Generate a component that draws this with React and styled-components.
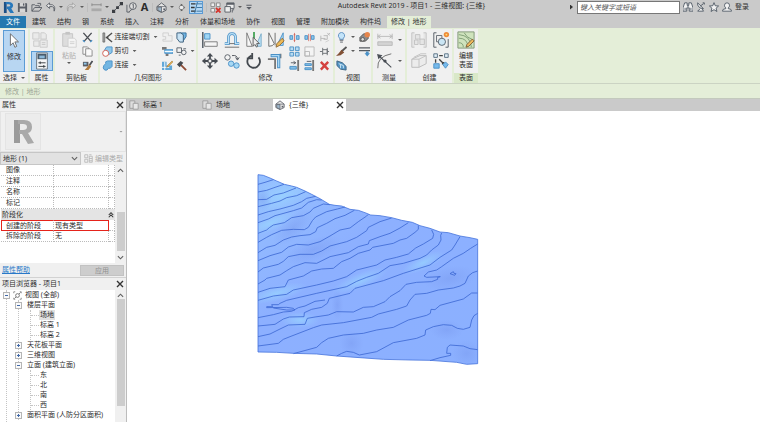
import React from 'react';
import styled, { createGlobalStyle, css } from 'styled-components';

const GlobalStyle = createGlobalStyle`
  * {
    box-sizing: border-box;
  }

  body {
    margin: 0;
    overflow: hidden;
    background: #fff;
    color: #2c2c2c;
    font: 7px/10px 'Noto Sans', 'Noto Sans CJK SC', sans-serif;
  }

  button, input, select {
    font: inherit;
    color: inherit;
    margin: 0;
    padding: 0;
    border: 0;
    background: none;
  }
`;

const ink = '#5a5e66';
const blue = '#4a90c6';
const sky = '#8fc7ea';
const pale = '#cfcfcf';

/* small icons use a 12 unit box, large ones an 18 unit box */
const small = {
  save: (
    <>
      <path d="M1 1h9l1 1v9H1z" fill={ink} />
      <path d="M3 1h6v4H3zM3 7h6v4H3z" fill="#d6d6d6" />
      <path d="M6.5 1.5h1.5v2.5H6.5z" fill={ink} />
    </>
  ),
  open: <path d="M1 10V3h3l1 1h4v2M1 10l3-4h8l-3 4zM7 1.5h3.5V4" fill="none" stroke={ink} />,
  undo: <path d="M5 1L1.5 4 5 7V5h3q2.5.5 2 5 2-5-2-7H5z" fill="#e6e6e6" stroke={ink} />,
  redo: <path d="M7 1l3.5 3L7 7V5H4Q1.500 5.500 2 10 0 5 4 3h3z" fill="#ddd" stroke="#a4a4a4" />,
  measure: (
    <>
      <path d="M1 3h10M1 1.500v3M11 1.500v3" stroke="#8a8a8a" fill="none" />
      <path d="M.5 7h11v3H.5z" fill="#aaa" />
    </>
  ),
  line: (
    <>
      <path d="M2 10L10 2" stroke={ink} />
      <path d="M0 8.500h3.500V12H0zM4.500 4.500h3v3h-3zM8.500 0H12v3.500H8.500z" fill="#3a3d42" />
    </>
  ),
  tag: (
    <>
      <circle cx="7.500" cy="4.500" r="3.700" fill="#ddd" stroke={ink} />
      <path d="M7 7.500L3 11M1 3v8h3M7 3l1-.5V7" stroke={ink} fill="none" />
    </>
  ),
  cube: (
    <>
      <path d="M1 5l5-4 5 4v4l-5 2.500L1 9z" fill="#e6e6e6" stroke={ink} />
      <path d="M1 5h10M6 5.500v5.500L2 9V5.500z" fill="#9db6ca" stroke={ink} strokeWidth=".8" />
      <path d="M8 7h2v2H8z" fill={ink} />
    </>
  ),
  section: (
    <>
      <circle cx="6" cy="6" r="3" fill="#eee" stroke="#777" />
      <path d="M5 1l3 1.500L5 4zM5 8l3 1.500L5 11z" fill="#555" />
      <path d="M9 4l2 2-2 2" fill="#777" />
    </>
  ),
  closeViews: (
    <>
      <path d="M1 1h4v4H1zM7 1h4v4H7zM1 7h4v4H1z" fill="#eee" stroke="#888" />
      <path d="M6.500 6.500l5 5M11.500 6.500l-5 5" stroke="#d6362e" strokeWidth="2" />
    </>
  ),
  switchViews: (
    <>
      <path d="M3 1h8v6H3z" fill="#eee" stroke={ink} />
      <path d="M3 2h8" stroke={ink} strokeWidth="2" />
      <path d="M1 5h6v6H1z" fill="#eee" stroke={ink} />
      <path d="M9 11.500V8.500h2" stroke={ink} fill="none" />
    </>
  ),
  customise: <path d="M2 2.500h8v1.500H2zM2 6h8L6 10z" fill={ink} />,
  binoculars: (
    <>
      <path d="M2 1h3v3h2V1h3l2 6v4H7.500V7h-3v4H0V7z" fill="#f2f2f2" stroke="#444f5c" />
      <path d="M2.500 7v3M9.500 7v3M5 5h2" stroke="#444f5c" />
    </>
  ),
  satellite: (
    <>
      <path d="M2 1q-1 6 7 7zM5 8l-3 3h7L7 8" fill="#f2f2f2" stroke="#444f5c" />
      <path d="M5 5l4-3M8 1h2v2" stroke="#444f5c" fill="none" />
    </>
  ),
  star: <path d="M6 .8l1.500 3.700 4 .3-3 2.600 1 4L6 9.200l-3.500 2.200 1-4-3-2.600 4-.3z" fill="#f2f2f2" stroke="#444f5c" />,
  user: <path d="M6 1q3 0 3 3 0 2-1.500 3v1q4 0 4 3H.5q0-3 4-3V7Q3 6 3 4q0-3 3-3z" fill="#f2f2f2" stroke="#444f5c" />,
  cut: (
    <>
      <path d="M1.500 1l8 9M10.500 1l-8 9" stroke="#4a4d53" strokeWidth="1.500" />
      <path d="M1 9l2 2M9 11l2-2" stroke={blue} strokeWidth="1.500" />
    </>
  ),
  copy: (
    <>
      <path d="M1 1h5l1 1v7H1z" fill="#fafafa" stroke="#888" />
      <path d="M4 3h5l2 2v6H4z" fill="#fafafa" stroke="#888" />
    </>
  ),
  match: (
    <>
      <path d="M1 2h6v5H1z" fill="#5c5f65" />
      <path d="M2 3h3v2H2z" fill={sky} />
      <path d="M11.500 1L8 6" stroke="#4c4f55" strokeWidth="2" />
      <path d="M8 5l2 2-3 4-4 0z" fill="#b27b3b" />
    </>
  ),
  cope: (
    <>
      <path d="M1 1h2v10H1z" fill="#a9a9a9" stroke="#555" strokeWidth=".7" />
      <path d="M11 1L5 6l6 5M4 6h3" fill="none" stroke="#4d4d4d" strokeWidth="1.500" />
    </>
  ),
  cutGeo: (
    <>
      <path d="M3 4l2-3h6v6L8 9H3z" fill={sky} stroke={blue} />
      <circle cx="4" cy="8" r="3.300" fill="#fff" stroke="#cf5a4e" />
    </>
  ),
  join: <path d="M4 4V2l2-1h5v6L9 9H7q-1 3-4 2Q0 9 2 6z" fill="#72b5e2" stroke={blue} />,
  wallJoinGrey: <path d="M1 1h6v3h4v6H1V8h3V5H1z" fill="#efefef" stroke={pale} />,
  wallJoin: (
    <>
      <path d="M4 1h7v4l-4 6z" fill="#6fb4e3" stroke="#336e9d" />
      <path d="M1 1h4l3 2v8H4L1 7z" fill="#c8e3f5" stroke="#3a5d79" />
    </>
  ),
  beam: (
    <>
      <path d="M0 1h5v3H0zM4 8h3v3H4z" fill="#777" />
      <path d="M3 4h9v4H3z" fill="#88c2e9" stroke={blue} />
      <path d="M3 6h9" stroke="#fff" />
    </>
  ),
  split: <path d="M1 2h5v5H1zM6 7a2.500 2.500 0 1 0 5 0 2.500 2.500 0 0 0-5 0M3 10h2M8 3h3" fill="#f1f1f1" stroke="#596069" />,
  paint: (
    <>
      <path d="M0 2h5v4h6v5H0z" fill="#60a7d8" />
      <path d="M0 8h8M3 2v9" stroke="#fff" />
      <path d="M11 1L6 6l-1 2 2-1 5-5z" fill="#e7b04c" stroke="#896024" strokeWidth=".5" />
    </>
  ),
  hammer: (
    <>
      <path d="M5 5l6 6" stroke="#8d4b35" strokeWidth="2" />
      <path d="M1 5l4-4 3 2-4 5z" fill="#464b51" />
    </>
  ),
  splitEl: (
    <>
      <path d="M1 4h3v4H1zM8 4h3v4H8z" fill={sky} stroke={blue} />
      <path d="M6 1v10M5 3h2M5 9h2" stroke="#d0564a" strokeWidth=".8" />
    </>
  ),
  splitGap: (
    <>
      <path d="M1 4h3v4H1zM8 4h3v4H8z" fill={sky} stroke={blue} />
      <path d="M5 2v8M7 2v8" stroke="#d0564a" strokeWidth=".7" />
    </>
  ),
  unpin: (
    <>
      <path d="M2 4v6M2 7h5M5 4h4v4H5M9 1l3 3M12 1L9 4" fill="none" stroke="#b8b8b8" />
      <path d="M7 11l4-2" stroke={pale} />
    </>
  ),
  array: <path d="M1 1h4v4H1zM7 1h4v4H7zM1 7h4v4H1zM7 7h4v4H7z" fill="#b9dcf3" stroke={blue} />,
  scale: <path d="M1 1h10v10H1zM1 6h5v5H1z" fill="#f4f4f4" stroke="#b9b9b9" />,
  pin: <path d="M1 6h3M4 2v8M4 4h5v4H4M9 2v8M9 6h2" fill="none" stroke="#6a6e73" />,
  trimOne: (
    <>
      <path d="M9 0h2v12H9z" fill="#777" />
      <path d="M1 7h7v3H1z" fill="#82bee7" stroke={blue} />
      <path d="M2 3h5M5 1.500L7.500 3 5 4.500" stroke={ink} fill="none" />
    </>
  ),
  trimMany: (
    <>
      <path d="M9 0h2v12H9z" fill="#777" />
      <path d="M1 4h7v2H1zM1 8.500h7v2H1z" fill="#82bee7" stroke={blue} />
      <path d="M3 1.500h5" stroke={ink} />
    </>
  ),
  remove: <path d="M2 2l8 8.500M10 2l-8 8.500" stroke="#d4413f" strokeWidth="2.600" />,
  bulb: (
    <>
      <path d="M6 .5a3.500 3.500 0 0 1 2 6.300V8H4V6.800A3.500 3.500 0 0 1 6 .5z" fill="#c4e4fa" stroke="#5d8fc1" />
      <path d="M4 9h4M4.500 11h3" stroke={ink} />
    </>
  ),
  brush: (
    <>
      <path d="M11.500 1L6 6" stroke="#555" strokeWidth="2" />
      <path d="M6 4l3 3-4 3-5 1 3-3z" fill="#825135" />
    </>
  ),
  box: (
    <>
      <path d="M1 1l6 2 4 4v4l-6-1-4-4z" fill="#5495c5" stroke="#3c6380" />
      <path d="M3 4l5 2v3M5 5v4" fill="none" stroke="#d5ecfa" />
    </>
  ),
  override: (
    <>
      <path d="M1 6l4-4h5v5L7 10H1z" fill="#8b8b8b" stroke="#555" />
      <circle cx="4" cy="8" r="2" fill="#ddd" stroke="#555" />
      <circle cx="9" cy="3" r="3" fill="#e6854b" />
    </>
  ),
  lineWork: (
    <>
      <path d="M0 2h12M0 5h12" stroke="#555a60" strokeWidth="1.500" />
      <path d="M7.500 6v2H6l3 3.500L12 8h-1.500V6z" fill={blue} />
    </>
  ),
  sheet: (
    <>
      <path d="M1 1h6v9H1z" fill="#ddd" stroke="#999" />
      <path d="M5 4h6v7H5z" fill="#e7e7e7" stroke="#999" />
    </>
  ),
  typeEdit: <path d="M1 1h4v4H1zM1 7h4v4H1zM7 3h4v8H7zM7 6h4M7 9h4M7 1h3" fill="none" stroke="#b0b0b0" />,
  views: (
    <>
      <path d="M1 3V1h2M9 1h2v2M11 9v2H9M3 11H1V9" fill="none" stroke="#777" />
      <circle cx="6" cy="6" r="2.500" fill="none" stroke="#555" />
      <path d="M2 10l2-2M10 2L8 4" fill="none" stroke="#555" />
    </>
  ),
};

const large = {
  arrow: <path d="M5 1v13l3-3 2 5 2-1-2-5h4z" fill="#fff" stroke="#666" />,
  families: <path d="M1 1h7v7H1zM10 4V1h4l2 2v5h-6zM2 10h6v6H2zM9 9h8v8H9zM11 12h4M11 14h4" fill="#eaeaea" stroke="#c8c8c8" />,
  properties: (
    <>
      <path d="M3 0h12v18H3z" fill="#f6f7f8" stroke="#65717d" />
      <path d="M4 1h10v6H4z" fill="#4a5b6c" />
      <path d="M6 3h6v3H6z" fill="#8db9da" />
      <path d="M5 11h8M5 15h8M7 9.500v3M11 13.500v3" stroke="#30343a" />
    </>
  ),
  paste: (
    <>
      <path d="M2 2h11v14H2z" fill="#ddd" stroke="#c4c4c4" />
      <path d="M5 0h5v3H5z" fill="#c4c4c4" />
      <path d="M8 7h7l2 2v8H8zM10 11h5M10 13h5" fill="#f4f4f4" stroke={pale} />
    </>
  ),
  align: (
    <>
      <path d="M1 0v18" stroke="#4f5861" strokeWidth="1.600" />
      <path d="M3 2h6v6H3z" fill="#9fd6f5" stroke={blue} />
      <path d="M3 11h14v5H3z" fill="#f5f5f5" stroke="#777" />
    </>
  ),
  offset: (
    <>
      <path d="M1 13h4V7q0-5 4-5t4 5v6h4" fill="none" stroke={blue} strokeWidth="3" />
      <path d="M1 13h4V7q0-5 4-5t4 5v6h4" fill="none" stroke="#bce0f5" strokeWidth="1.400" />
      <path d="M1 17h16M6 13h6" stroke="#666" />
    </>
  ),
  mirrorPick: (
    <>
      <path d="M1 1v15h6z" fill="#f7f7f7" stroke="#777" />
      <path d="M17 2v14h-6z" fill="#b9dff5" stroke="#7caeca" />
      <path d="M9 0v8" stroke="#45a356" strokeWidth="2" />
      <path d="M8 6v10l2-2 2 3 1-1-1-3h3z" fill="#eee" stroke="#555" />
    </>
  ),
  mirrorDraw: (
    <>
      <path d="M1 1v15q5 0 6-3zM8 1v14" fill="#f7f7f7" stroke="#666" />
      <path d="M17 1v14h-7z" fill="#aedbf5" stroke={blue} />
      <path d="M16 7l-6 6-1 4 4-2 5-5z" fill="#ecb957" stroke="#8d6939" />
    </>
  ),
  move: (
    <>
      <path d="M9 2v14M2 9h14" stroke="#474c53" strokeWidth="2" />
      <path d="M9 0l3.500 4h-7zM9 18l3.500-4h-7zM0 9l4-3.500v7zM18 9l-4-3.500v7z" fill="#474c53" />
      <path d="M7 7h4v4H7z" fill="#eee" stroke="#474c53" />
    </>
  ),
  duplicate: (
    <>
      <circle cx="4" cy="5" r="3" fill="#f4f4f4" stroke="#565c64" />
      <circle cx="8" cy="12" r="3" fill="#a7d8f4" stroke={blue} />
      <circle cx="14" cy="14" r="3" fill="#a7d8f4" stroke={blue} />
      <path d="M9 3q6-1 6 4M13 5l2 3 2-3" stroke="#474c53" fill="none" />
    </>
  ),
  rotate: <path d="M6 3A7 7 0 1 0 14 5M7 0v6H1" fill="none" stroke="#44494f" strokeWidth="2" />,
  trim: (
    <>
      <path d="M0 7h8v11M14 6V1" fill="none" stroke="#777" strokeWidth="2" />
      <path d="M3 3h11M12 3v14" fill="none" stroke={blue} strokeWidth="3.500" />
      <path d="M4 3h8v13" fill="none" stroke="#a9d8f5" strokeWidth="1.500" />
    </>
  ),
  dimension: (
    <>
      <path d="M1 5h16M1 2v6M17 2v6M4 3L1 5l3 2M14 3l3 2-3 2" fill="none" stroke="#b9b9b9" />
      <path d="M1 11h16v4H1z" fill="#d4d4d4" stroke="#b9b9b9" />
    </>
  ),
  measureArc: (
    <>
      <path d="M1 17Q0 4 16 1" fill="none" stroke="#686868" />
      <path d="M3 4l13 12M1 2l4 1-3 3z" fill="#474c53" stroke="#474c53" strokeWidth="1.200" />
      <circle cx="9" cy="9" r="1.800" fill="#474c53" />
    </>
  ),
  group: <path d="M4 1H1v16h3M14 1h3v16h-3M4 9h4v5H4zM5 3h5v5H5zM10 8h5v6h-5z" fill="#e5e5e5" stroke="#c1c1c1" />,
  similar: (
    <>
      <path d="M4 1H1v16h3M14 17h3V8" fill="none" stroke="#4e5660" />
      <path d="M4 4h6v7H4z" fill="#eee" stroke="#626972" />
      <circle cx="10" cy="11" r="4" fill="#cbe5f4" stroke="#525d69" />
      <circle cx="15" cy="3" r="3" fill="#ef8c38" />
      <circle cx="15" cy="3" r="1" fill="#fbe17a" />
    </>
  ),
  parts: (
    <>
      <path d="M1 7l9-4h7v9l-8 4H1z" fill="#ececec" stroke="#b9b9b9" />
      <path d="M1 7h8v9M3 5l8-4h6M9 7l8-4" fill="none" stroke="#c0c0c0" />
    </>
  ),
  assembly: (
    <>
      <path d="M1 1h4v4H1zM13 1h4v4h-4z" fill="#e2eff7" stroke="#536b7f" />
      <path d="M7 3h4M3 7v4M7 7l5 5M10 12h2v-2" stroke="#444" fill="none" strokeWidth="1.500" />
      <path d="M1 12h6v5H1zM14 10l3 3-3 4-3-4z" fill="#77baeb" stroke={blue} />
    </>
  ),
  surface: (
    <>
      <path d="M0 0h18v18H0z" fill="#cfe3bd" stroke="#7d9375" />
      <path d="M1 12q5 0 5 5M1 7q10 0 10 10M1 3q13 1 14 14M7 1q2 5 10 8" stroke="#7d9c74" fill="none" />
      <path d="M16 8l-6 6-1 3 3-1 6-6z" fill="#eebb5d" stroke="#795a38" />
    </>
  ),
};

const Svg = styled.svg`
  display: block;
  flex: none;
  width: ${({ $size }) => $size}px;
  height: ${({ $size }) => $size}px;
`;

const Icon = ({ name, size = 11 }) => (
  <Svg $size={size} viewBox="0 0 12 12" aria-hidden="true">
    {small[name]}
  </Svg>
);

const BigIcon = ({ name }) => (
  <Svg $size={18} viewBox="-1 -1 20 20" aria-hidden="true">
    {large[name]}
  </Svg>
);

const RevitLogo = () => (
  <Svg $size={11} viewBox="0 0 12 12" aria-label="Revit">
    <path d="M1 0h3v12H1z" fill="#1b4f86" />
    <path d="M3 0h3q5 0 5 4 0 2-2 3l3 5H8L5 7.500H4V5h2q2 0 2-1.200T6 2.500H3z" fill="#2878bb" />
  </Svg>
);

const properties = [
  { label: '图像', value: '' },
  { label: '注释', value: '' },
  { label: '名称', value: '' },
  { label: '标记', value: '' },
];

const tabs = ['建筑', '结构', '钢', '系统', '插入', '注释', '分析', '体量和场地', '协作', '视图', '管理', '附加模块', '构件坞'];

const branches = [
  { label: '楼层平面', children: ['场地', '标高 1', '标高 2'] },
  { label: '天花板平面' },
  { label: '三维视图' },
  { label: '立面 (建筑立面)', children: ['东', '北', '南', '西'] },
  { label: '面积平面 (人防分区面积)' },
];

/* terrain is drawn at three units to the pixel */
const outline = 'M24 14L40 16 60 24 80 33 103 43 125 48 140 52 165 63 185 73 210 86 238 103 255 106 275 108 300 118 325 121 345 128 362 135 390 137 425 143 455 151 487 157 510 167 540 175 570 186 595 188 630 198 660 203 683 208V581L650 583 620 577 540 571 480 570 400 568 330 563 260 558 200 552 130 550 80 547 24 546Z';

const contours = [
  '24 43 45 37 70 29',
  '24 66 50 61 75 52 102 43',
  '24 89 50 88 72 75 100 69 138 54',
  '24 110 65 100 90 93 110 83 140 77 167 65',
  '24 135 55 125 90 117 130 106 155 95 170 85 197 79',
  '24 158 55 147 75 137 90 133 130 122 155 114 175 97 200 89 215 90',
  '24 190 50 180 58 173 70 165 103 158 125 143 160 137 180 126 190 115 220 102 240 104',
  '24 217 50 202 65 194 95 181 130 178 163 179 175 172 187 152 197 141 230 125 262 117 285 111',
  '24 248 50 232 75 226 100 210 125 201 150 197 180 194 197 185 202 173 230 160 255 146 285 136 313 121',
  '24 272 60 257 95 247 115 231 140 223 175 225 210 215 240 198 270 180 300 174 325 155 350 138 355 133',
  '24 306 40 294 85 283 100 274 115 260 150 253 190 253 215 243 240 228 290 215 320 202 350 182 355 172 390 155 425 144',
  '24 342 45 330 50 325 90 315 110 302 130 290 165 278 200 280 240 260 295 248 325 230 355 222 358 212 390 200 420 190 450 174 475 158',
  '24 367 60 355 105 350 115 330 160 318 185 303 215 297 250 295 275 275 300 265 325 250 360 240 368 232 430 220 450 210 470 205 495 187 505 178 505 166',
  '24 391 70 378 110 373 130 360 200 345 250 333 290 320 320 300 380 285 405 270 440 262 475 252 497 234 520 222 548 205 551 193 545 180',
  '90 400 110 391 200 370 290 350 320 334 350 322 385 310 420 287 460 280 510 265 530 255 545 240 565 225 573 210 572 196 575 189',
  '90 400 85 404 65 404 68 410 50 410 50 413 110 412 130 415 135 420 110 420 70 414',
  '24 443 70 434 100 426 125 424 145 413 165 408 195 394 225 390',
  '24 468 75 463 100 447 118 441 162 440 163 428 185 418 215 412 232 400 238 385 300 370 315 355 400 332 460 310 540 285 570 262 605 240 615 225 630 200',
  '24 500 60 492 90 477 115 465 165 463 172 445 195 441 235 435 260 425 310 426 340 412 370 410 405 395 420 380 450 362 468 343 500 337 545 335 563 328 563 322 571 320 530 322 522 318 535 306 560 300 575 290 610 265 640 250 662 235 683 222',
  '24 528 85 520 100 508 120 500 190 473 215 465 280 458 365 442 385 432 440 418 470 408 480 390 495 373 530 370 565 360 610 354 630 348 645 340 655 318 668 308 683 303',
  '130 551 200 532 215 518 235 505 280 495 340 490 380 480 430 472 475 450 530 436 541 430 543 418 555 419 570 406 640 387 665 369 683 369',
  '260 558 275 550 290 544 310 547 328 555 380 545 430 518 500 505 525 495 527 480 550 470 580 464 605 466 622 475 640 478 660 472 665 450 672 437 683 430',
  '540 572 570 563 602 556 602 550 590 550 592 532 600 525 640 528 660 536 683 539',
  '600 311 610 305 612 310 618 311 614 316 600 311',
];

const patches = [
  { x: 95, y: 78, rx: 115, ry: 55, turn: -18, fill: 'light' },
  { x: 60, y: 160, rx: 90, ry: 24, turn: -22, fill: 'light' },
  { x: 80, y: 370, rx: 95, ry: 24, turn: -14, fill: 'light' },
  { x: 330, y: 332, rx: 90, ry: 24, turn: -22, fill: 'light' },
  { x: 520, y: 278, rx: 70, ry: 22, turn: -25, fill: 'light' },
  { x: 150, y: 450, rx: 60, ry: 24, turn: 0, fill: 'light' },
  { x: 130, y: 172, rx: 75, ry: 34, turn: -40, fill: 'shade' },
  { x: 38, y: 88, rx: 28, ry: 36, turn: 0, fill: 'shade' },
  { x: 190, y: 240, rx: 90, ry: 34, turn: -20, fill: 'shade' },
  { x: 600, y: 325, rx: 80, ry: 36, turn: -10, fill: 'shade' },
  { x: 305, y: 520, rx: 36, ry: 38, turn: 0, fill: 'shade' },
  { x: 590, y: 480, rx: 50, ry: 30, turn: 0, fill: 'shade' },
  { x: 262, y: 405, rx: 18, ry: 45, turn: 0, fill: 'shade' },
  { x: 650, y: 550, rx: 45, ry: 40, turn: 0, fill: 'shade' },
];

const Terrain = () => (
  <TerrainDrawing viewBox="21 12 666 576" role="img" aria-label="地形">
    <defs>
      <linearGradient id="ground" x1="0" y1="0" x2="1" y2="1">
        <stop offset="0" stopColor="#95c0ff" />
        <stop offset=".4" stopColor="#8db0ff" />
        <stop offset="1" stopColor="#8bb0ff" />
      </linearGradient>
      <radialGradient id="light">
        <stop offset="0" stopColor="#9cdcff" stopOpacity=".6" />
        <stop offset="1" stopColor="#9cd6ff" stopOpacity="0" />
      </radialGradient>
      <radialGradient id="shade">
        <stop offset="0" stopColor="#7898ee" stopOpacity=".45" />
        <stop offset="1" stopColor="#7c9bf0" stopOpacity="0" />
      </radialGradient>
      <clipPath id="edge">
        <path d={outline} />
      </clipPath>
    </defs>
    <path d={outline} fill="url(#ground)" />
    <g clipPath="url(#edge)">
      {patches.map(({ x, y, rx, ry, turn, fill }) => (
        <ellipse key={`${x}-${y}`} cx={x} cy={y} rx={rx} ry={ry} fill={`url(#${fill})`} transform={`rotate(${turn} ${x} ${y})`} />
      ))}
    </g>
    {contours.map((points) => (
      <polyline key={points} points={points} fill="none" stroke="#3a66d2" strokeWidth="2.400" strokeLinejoin="round" />
    ))}
    <path d={outline} fill="none" stroke="#4472dc" strokeWidth="2.400" />
  </TerrainDrawing>
);

const ViewTab = ({ icon, label, active }) => (
  <DocTab $active={active} role="tab" aria-selected={Boolean(active)}>
    <Icon name={icon} size={10} />
    <span>{label}</span>
    {active && <Cross />}
  </DocTab>
);

const Cross = () => (
  <Svg $size={8} viewBox="0 0 8 8" aria-hidden="true">
    <path d="M1 1l6 6M7 1L1 7" stroke="#333" strokeWidth="1.400" />
  </Svg>
);

const Chevron = ({ up }) => (
  <Svg $size={7} viewBox="0 0 8 8" aria-hidden="true">
    <path d={up ? 'M1 5.500l3-3 3 3' : 'M1 2.500l3 3 3-3'} fill="none" stroke="#606060" strokeWidth="1.300" />
  </Svg>
);

const Tool = ({ name, label, caret }) => (
  <SmallTool aria-label={label || name}>
    <Icon name={name} />
    {label}
    {caret && <Caret />}
  </SmallTool>
);

const BigTool = ({ name, caret }) => (
  <LargeTool aria-label={name}>
    <BigIcon name={name} />
    {caret && <Caret />}
  </LargeTool>
);

const TitleBar = () => (
  <Header>
    <QuickAccess>
      <RevitLogo />
      <Icon name="save" />
      <Icon name="open" />
      <Icon name="undo" />
      <Caret />
      <Icon name="redo" />
      <Caret />
      <Separator />
      <Icon name="measure" />
      <Caret />
      <Icon name="line" />
      <Icon name="tag" />
      <Letter>A</Letter>
      <Separator />
      <Icon name="cube" />
      <Caret />
      <Icon name="section" size={9} />
      <ThinLines aria-label="细线" aria-pressed="true">
        <Svg $size={11} viewBox="0 0 12 12" aria-hidden="true">
          <path d="M0 2h5M0 6h4M0 10h5" stroke="#333" strokeWidth="1.500" />
          <path d="M6 2h6M6 6h6M6 10h6M7 0L4 12" stroke="#38719d" fill="none" />
        </Svg>
      </ThinLines>
      <Separator />
      <Icon name="closeViews" />
      <Icon name="switchViews" />
      <Caret />
      <Icon name="customise" size={8} />
    </QuickAccess>
    <Title>Autodesk Revit 2019 - 项目1 - 三维视图: {'{三维}'}</Title>
    <InfoCenter>
      <SideCaret />
      <Search aria-label="搜索" placeholder="键入关键字或短语" />
      <Icon name="binoculars" size={10} />
      <Icon name="satellite" size={10} />
      <Icon name="star" size={10} />
      <Login href="#login">
        <Icon name="user" size={10} />
        登录
      </Login>
    </InfoCenter>
  </Header>
);

const Ribbon = () => (
  <RibbonBar>
    <Panel $width={28}>
      <PanelBody>
        <ModifyButton>
          <BigIcon name="arrow" />
          修改
        </ModifyButton>
      </PanelBody>
      <PanelLabel>选择 <Caret /></PanelLabel>
    </Panel>
    <Panel $width={23}>
      <PanelBody>
        <BigColumn>
          <BigTool name="families" />
          <PressedTool aria-label="属性" aria-pressed="true">
            <BigIcon name="properties" />
          </PressedTool>
        </BigColumn>
      </PanelBody>
      <PanelLabel>属性</PanelLabel>
    </Panel>
    <Panel $width={43}>
      <PanelBody $gap={4}>
        <Stacked disabled>
          <BigIcon name="paste" />
          粘贴
          <Caret />
        </Stacked>
        <Column>
          <Tool name="cut" />
          <Tool name="copy" />
          <Tool name="match" />
        </Column>
      </PanelBody>
      <PanelLabel>剪贴板</PanelLabel>
    </Panel>
    <Panel $width={96}>
      <PanelBody>
        <WideColumn>
          <Tool name="cope" label="连接端切割" caret />
          <Tool name="cutGeo" label="剪切" caret />
          <Tool name="join" label="连接" caret />
        </WideColumn>
        <Column>
          <Tool name="wallJoinGrey" />
          <Tool name="beam" />
          <Tool name="paint" />
        </Column>
        <IndentedColumn>
          <Tool name="wallJoin" />
          <Tool name="split" caret />
          <Tool name="hammer" />
        </IndentedColumn>
      </PanelBody>
      <PanelLabel>几何图形</PanelLabel>
    </Panel>
    <Panel $width={135}>
      <PanelBody $gap={4}>
        <BigColumn>
          <BigTool name="align" />
          <BigTool name="move" />
        </BigColumn>
        <BigColumn>
          <BigTool name="offset" />
          <BigTool name="duplicate" />
        </BigColumn>
        <BigColumn>
          <BigTool name="mirrorPick" />
          <BigTool name="rotate" />
        </BigColumn>
        <BigColumn>
          <BigTool name="mirrorDraw" />
          <BigTool name="trim" />
        </BigColumn>
        <Column>
          <Tool name="splitEl" />
          <Tool name="array" />
          <Tool name="trimOne" />
        </Column>
        <Column>
          <Tool name="splitGap" />
          <Tool name="scale" />
          <Tool name="trimMany" />
        </Column>
        <Column>
          <Tool name="unpin" />
          <Tool name="pin" />
          <Tool name="remove" />
        </Column>
      </PanelBody>
      <PanelLabel>修改</PanelLabel>
    </Panel>
    <Panel $width={36}>
      <PanelBody $gap={4}>
        <Column>
          <Tool name="bulb" caret />
          <Tool name="brush" caret />
          <Tool name="box" />
        </Column>
        <Column>
          <Tool name="override" />
          <Tool name="lineWork" />
        </Column>
      </PanelBody>
      <PanelLabel>视图</PanelLabel>
    </Panel>
    <Panel $width={32}>
      <PanelBody>
        <BigColumn>
          <BigTool name="dimension" caret />
          <BigTool name="measureArc" caret />
        </BigColumn>
      </PanelBody>
      <PanelLabel>测量</PanelLabel>
    </Panel>
    <Panel $width={45}>
      <PanelBody $gap={4}>
        <BigColumn>
          <BigTool name="group" />
          <BigTool name="parts" />
        </BigColumn>
        <BigColumn>
          <BigTool name="similar" />
          <BigTool name="assembly" />
        </BigColumn>
      </PanelBody>
      <PanelLabel>创建</PanelLabel>
    </Panel>
    <Panel $width={24}>
      <PanelBody>
        <Stacked>
          <BigIcon name="surface" />
          <span>编辑</span>
          <span>表面</span>
        </Stacked>
      </PanelBody>
      <PanelLabel $context>表面</PanelLabel>
    </Panel>
  </RibbonBar>
);

const PropertiesPalette = () => (
  <section>
    <PaletteHeader>
      属性
      <Cross />
    </PaletteHeader>
    <Preview>
      <PreviewImage>
        <Svg $size={26} viewBox="0 0 26 26" aria-hidden="true">
          <path d="M4 1h6v23H4z" fill="#9b9b9b" />
          <path d="M8 1h6q8 0 8 7 0 5-4 6l6 10-6 1-6-10h-3v-4h4q4 0 4-3t-4-3H8z" fill="#a9a9a9" />
        </Svg>
      </PreviewImage>
      <Caret $light />
    </Preview>
    <TypeRow>
      <TypeSelect>
        <select aria-label="类型">
          <option>地形 (1)</option>
        </select>
        <Chevron />
      </TypeSelect>
      <EditType disabled>
        <Icon name="typeEdit" size={9} />
        编辑类型
      </EditType>
    </TypeRow>
    <Scroller>
      <PropertyTable>
        <colgroup>
          <col width="53" />
          <col />
          <col width="6" />
        </colgroup>
        <tbody>
          {properties.map(({ label, value }) => (
            <tr key={label}>
              <Cell as="th" scope="row">{label}</Cell>
              <Cell>{value}</Cell>
              <Cell />
            </tr>
          ))}
          <tr>
            <GroupCell colSpan="3">
              <div>
                阶段化
                <Svg $size={6} viewBox="0 0 8 8" aria-hidden="true">
                  <path d="M1 4l3-3 3 3M1 7l3-3 3 3" fill="none" stroke="#333" strokeWidth="1.400" />
                </Svg>
              </div>
            </GroupCell>
          </tr>
          <tr>
            <Cell as="th" scope="row" $mark="left">创建的阶段</Cell>
            <Cell $mark="right">现有类型</Cell>
            <Cell />
          </tr>
          <tr>
            <Cell as="th" scope="row">拆除的阶段</Cell>
            <Cell>无</Cell>
            <Cell />
          </tr>
        </tbody>
      </PropertyTable>
      <ScrollTrack $offset={38} $thumb={39}>
        <Chevron up />
        <i />
        <Chevron />
      </ScrollTrack>
    </Scroller>
    <PaletteFooter>
      <a href="#help">属性帮助</a>
      <button type="button" disabled>应用</button>
    </PaletteFooter>
  </section>
);

const ProjectBrowser = () => (
  <Browser>
    <PaletteHeader>
      项目浏览器 - 项目1
      <Cross />
    </PaletteHeader>
    <TreeArea>
      <Tree>
        <TreeRow>
          <Toggle aria-label="折叠" $open />
          <Icon name="views" size={9} />
          视图 (全部)
        </TreeRow>
        <Branch>
          {branches.map(({ label, children }) => (
            <li key={label}>
              <TreeRow>
                <Toggle aria-label={children ? '折叠' : '展开'} $open={Boolean(children)} />
                {label}
              </TreeRow>
              {children && (
                <Leaves>
                  {children.map((child) => (
                    <Leaf key={child} $selected={child === '场地'}>
                      <span>{child}</span>
                    </Leaf>
                  ))}
                </Leaves>
              )}
            </li>
          ))}
        </Branch>
      </Tree>
      <ScrollTrack $offset={0} $thumb={107}>
        <Chevron up />
        <i />
      </ScrollTrack>
    </TreeArea>
  </Browser>
);

const App = () => (
  <Page>
    <GlobalStyle />
    <TitleBar />
    <TabBar>
      <FileTab>文件</FileTab>
      {tabs.map((tab) => (
        <Tab key={tab}>{tab}</Tab>
      ))}
      <Tab $active>修改 | 地形</Tab>
    </TabBar>
    <Ribbon />
    <OptionsBar>修改 | 地形</OptionsBar>
    <Workspace>
      <Sidebar>
        <PropertiesPalette />
        <ProjectBrowser />
      </Sidebar>
      <Documents>
        <DocTabs role="tablist">
          <ViewTab icon="sheet" label="标高 1" />
          <ViewTab icon="sheet" label="场地" />
          <ViewTab icon="cube" label="{三维}" active />
        </DocTabs>
        <Canvas>
          <Terrain />
        </Canvas>
      </Documents>
    </Workspace>
  </Page>
);

export default App;

const Page = styled.div`
  display: flex;
  flex-direction: column;
  height: 100vh;
`;

const Header = styled.header`
  display: flex;
  align-items: center;
  height: 16px;
  padding: 0 11px 2px 3px;
  background: #cacaca;
`;

const QuickAccess = styled.div`
  display: flex;
  align-items: center;
  gap: 3px;
`;

const Caret = styled.i`
  flex: none;
  width: 4px;
  height: 2px;
  background: ${({ $light }) => ($light ? '#9a9a9a' : '#5c5c5c')};
  clip-path: polygon(0 0, 100% 0, 50% 100%);
`;

const SideCaret = styled.i`
  width: 3px;
  height: 5px;
  margin-right: 1px;
  background: #333;
  clip-path: polygon(0 0, 100% 50%, 0 100%);
`;

const Separator = styled.i`
  width: 1px;
  height: 9px;
  background: #bdbdbd;
`;

const Letter = styled.b`
  width: 9px;
  font: bold 11px/12px 'Open Sans', sans-serif;
  text-align: center;
`;

const ThinLines = styled.button`
  display: flex;
  align-items: center;
  justify-content: center;
  width: 14px;
  height: 13px;
  background: #b5d8f5;
  border: 1px solid #5b9bd5;
`;

const Title = styled.h1`
  flex: 1;
  margin: 0;
  padding-bottom: 3px;
  font-size: 7px;
  font-weight: 400;
  line-height: 10px;
  text-align: center;
  white-space: nowrap;
`;

const InfoCenter = styled.div`
  display: flex;
  align-items: center;
  gap: 3px;
`;

const Search = styled.input`
  width: 103px;
  height: 13px;
  padding: 0 2px;
  background: #fff;
  border: 1px solid #777;

  &::placeholder {
    color: #555;
    font-style: italic;
  }
`;

const Login = styled.a`
  display: flex;
  align-items: center;
  gap: 3px;
  color: #333;
  text-decoration: none;
`;

const TabBar = styled.nav`
  display: flex;
  gap: 1px;
  height: 12px;
  background: #cacaca;
`;

const Tab = styled.button`
  padding: 0 5px;
  line-height: 12px;
  white-space: nowrap;

  ${({ $active }) => $active && css`
    padding: 0 4px;
    background: #e4eed8;
  `}
`;

const FileTab = styled(Tab)`
  width: 26px;
  color: #fff;
  background: #2478b0;
`;

const RibbonBar = styled.div`
  display: flex;
  gap: 2px;
  height: 56px;
  padding-top: 1px;
  background: #e4eed8;
  border-bottom: 1px solid #cbd3c3;
`;

const Panel = styled.section`
  display: flex;
  flex: none;
  flex-direction: column;
  width: ${({ $width }) => $width}px;
  background: #f0f0f0;
`;

const PanelBody = styled.div`
  display: flex;
  flex: 1;
  justify-content: center;
  gap: ${({ $gap = 0 }) => $gap}px;
  padding-top: 1px;
`;

const PanelLabel = styled.div`
  display: flex;
  align-items: center;
  justify-content: center;
  gap: 4px;
  height: 10px;
  background: ${({ $context }) => ($context ? '#d9e8c8' : 'transparent')};
`;

const Column = styled.div`
  display: flex;
  flex-direction: column;
`;

const WideColumn = styled(Column)`
  width: 60px;
`;

const IndentedColumn = styled(Column)`
  padding-left: 3px;
`;

const BigColumn = styled(Column)`
  gap: 1px;
`;

const SmallTool = styled.button`
  display: flex;
  align-items: center;
  gap: 2px;
  height: 14px;
  white-space: nowrap;

  ${Caret} {
    margin-left: 2px;
  }
`;

const LargeTool = styled.button`
  display: flex;
  align-items: center;
  gap: 4px;
  height: 20px;
`;

const PressedTool = styled(LargeTool)`
  justify-content: center;
  width: 22px;
  background: #b5d5f3;
  border: 1px solid #5b9bd5;
`;

const Stacked = styled.button`
  display: flex;
  flex-direction: column;
  align-items: center;
  height: 42px;
  line-height: 9px;

  svg {
    margin: 1px 0 2px;
  }

  ${Caret} {
    margin-top: 2px;
  }

  &:disabled {
    color: #adadad;
  }
`;

const ModifyButton = styled(Stacked)`
  width: 22px;
  background: #b8d6f2;
  border: 1px solid #5b9bd5;
`;

const OptionsBar = styled.div`
  height: 15px;
  padding: 0 5px;
  color: #9ba493;
  line-height: 15px;
  background: #e4eed8;
  border-bottom: 1px solid #c3c9bd;
`;

const Workspace = styled.main`
  display: flex;
  flex: 1;
  min-height: 0;
`;

const Sidebar = styled.aside`
  display: flex;
  flex: none;
  flex-direction: column;
  width: 127px;
  background: #f0f0f0;
  border-right: 1px solid #bcbcbc;
`;

const PaletteHeader = styled.h2`
  display: flex;
  align-items: center;
  justify-content: space-between;
  height: 12px;
  margin: 0;
  padding: 0 2px;
  font-size: 7px;
  font-weight: 400;
`;

const Preview = styled.div`
  display: flex;
  align-items: center;
  justify-content: space-between;
  height: 41px;
  padding: 0 2px 0 4px;
  border: 1px solid #e3e3e3;
`;

const PreviewImage = styled.div`
  display: grid;
  place-items: center;
  width: 36px;
  height: 37px;
  background: #ececec;
  border: 1px solid #e4e4e4;
`;

const TypeRow = styled.div`
  display: flex;
  align-items: center;
  height: 13px;
`;

const TypeSelect = styled.div`
  display: flex;
  align-items: center;
  width: 81px;
  height: 13px;
  padding: 0 2px;
  background: #e2e2e2;
  border: 1px solid #c6c6c6;

  select {
    flex: 1;
    appearance: none;
  }
`;

const EditType = styled.button`
  display: flex;
  flex: 1;
  align-items: center;
  gap: 2px;
  padding-left: 3px;
  color: #a9a9a9;
  white-space: nowrap;
`;

const Scroller = styled.div`
  display: flex;
  align-items: flex-start;
  height: 98px;
  padding-left: 1px;
  background: #fff;
`;

const PropertyTable = styled.table`
  flex: 1;
  table-layout: fixed;
  border-spacing: 0;
`;

const Cell = styled.td`
  height: 11px;
  padding: 0 1px;
  font-weight: 400;
  line-height: 10px;
  text-align: left;
  white-space: nowrap;
  border-right: 1px dotted #bbb;
  border-bottom: 1px dotted #bbb;

  th& {
    padding-left: 5px;
  }

  ${({ $mark }) => $mark && css`
    line-height: 9px;
    border-top: 1px solid #e5231b;
    border-bottom: 1px solid #e5231b;
    border-${$mark}: 1px solid #e5231b;
  `}

  ${({ $mark }) => $mark === 'left' && css`
    th& {
      padding-left: 4px;
    }
  `}
`;

const GroupCell = styled.td`
  height: 11px;
  padding: 0;
  background: #e4e4e4;

  div {
    display: flex;
    align-items: center;
    justify-content: space-between;
    padding: 0 1px;
  }
`;

const ScrollTrack = styled.div`
  display: flex;
  flex: none;
  flex-direction: column;
  align-items: center;
  align-self: stretch;
  width: 11px;
  padding: 2px 0;
  background: #f0f0f0;

  i {
    width: 8px;
    height: ${({ $thumb }) => $thumb}px;
    margin: ${({ $offset }) => $offset}px 0 auto;
    background: #cdcdcd;
  }
`;

const PaletteFooter = styled.div`
  display: flex;
  align-items: center;
  justify-content: space-between;
  height: 15px;
  padding: 0 2px;
  border-bottom: 1px solid #d2d2d2;

  a {
    color: #2878c8;
  }

  button {
    width: 44px;
    height: 11px;
    color: #919191;
    line-height: 10px;
    background: #cdcdcd;
    border: 1px solid #c2c2c2;
  }
`;

const Browser = styled.section`
  display: flex;
  flex: 1;
  flex-direction: column;
  min-height: 0;
`;

const TreeArea = styled.div`
  display: flex;
  flex: 1;
  min-height: 0;
  overflow: hidden;
  background: #fff;
`;

const Tree = styled.div`
  flex: 1;
  min-width: 0;
  margin-left: 6px;
  border-left: 1px dotted #c4c4c4;
`;

const TreeRow = styled.div`
  display: flex;
  align-items: center;
  gap: 3px;
  height: 10px;
  margin-left: -4px;
  white-space: nowrap;
`;

const Toggle = styled.button`
  position: relative;
  flex: none;
  width: 7px;
  height: 7px;
  background:
    linear-gradient(#4169a8, #4169a8) center / 3px 1px no-repeat,
    ${({ $open }) => ($open ? '' : 'linear-gradient(#4169a8, #4169a8) center / 1px 3px no-repeat,')}
    #fafafa;
  border: 1px solid #b5b5b5;
`;

const Branch = styled.ul`
  margin: 0 0 0 11px;
  padding: 0;
  list-style: none;
  border-left: 1px dotted #c4c4c4;

  ${TreeRow} {
    gap: 5px;
  }
`;

const Leaves = styled.ul`
  margin: 0 0 0 11px;
  padding: 0;
  list-style: none;
  border-left: 1px dotted #c4c4c4;
`;

const Leaf = styled.li`
  display: flex;
  align-items: center;
  height: 10px;

  &::before {
    width: 8px;
    border-top: 1px dotted #c4c4c4;
    content: '';
  }

  span {
    padding: 0 1px;
    background: ${({ $selected }) => ($selected ? '#e0e0e0' : 'transparent')};
  }
`;

const Documents = styled.div`
  display: flex;
  flex: 1;
  flex-direction: column;
  min-width: 0;
`;

const DocTabs = styled.div`
  display: flex;
  height: 12px;
  background: #cacaca;
`;

const DocTab = styled.button`
  display: flex;
  align-items: center;
  gap: 4px;
  width: 73px;
  padding: 0 2px;
  background: ${({ $active }) => ($active ? '#fff' : 'transparent')};

  span {
    flex: 1;
    text-align: left;
  }
`;

const Canvas = styled.div`
  flex: 1;
  padding: 63px 0 0 130px;
  background: #fff;
`;

const TerrainDrawing = styled.svg`
  display: block;
  width: 222px;
  height: 192px;
`;
